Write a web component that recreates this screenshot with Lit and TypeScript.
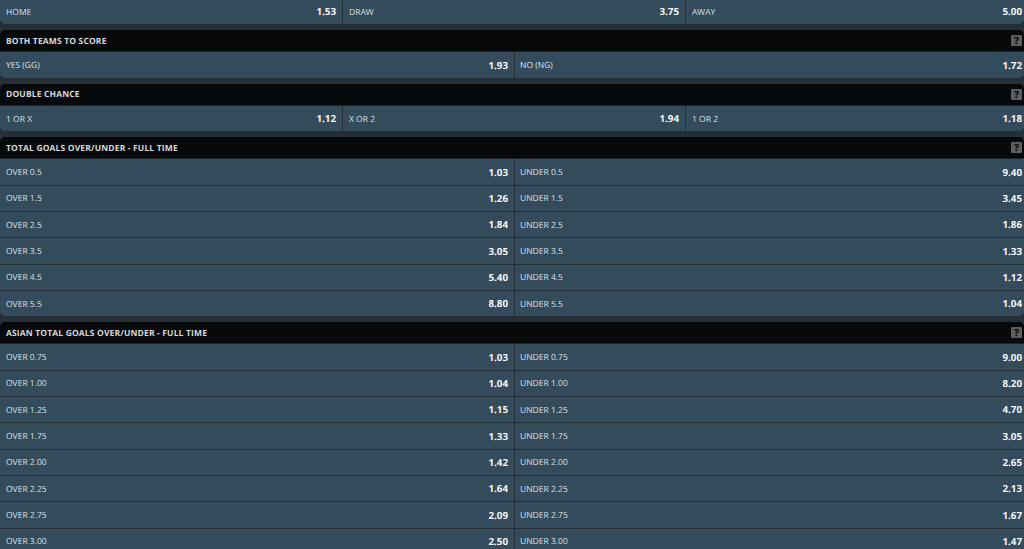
import { LitElement, html, css } from "lit";
import { customElement } from "lit/decorators.js";

type Cell = [string, string];
interface Market { title?: string; cols: number; cells: Cell[]; }

const ou = (lines: [string, string, string][]): Cell[] =>
  lines.flatMap(([l, o, u]) => [[`OVER ${l}`, o], [`UNDER ${l}`, u]] as Cell[]);

const markets: Market[] = [
  { cols: 3, cells: [["HOME", "1.53"], ["DRAW", "3.75"], ["AWAY", "5.00"]] },
  { title: "BOTH TEAMS TO SCORE", cols: 2, cells: [["YES (GG)", "1.93"], ["NO (NG)", "1.72"]] },
  { title: "DOUBLE CHANCE", cols: 3, cells: [["1 OR X", "1.12"], ["X OR 2", "1.94"], ["1 OR 2", "1.18"]] },
  { title: "TOTAL GOALS OVER/UNDER - FULL TIME", cols: 2, cells: ou([
    ["0.5", "1.03", "9.40"], ["1.5", "1.26", "3.45"], ["2.5", "1.84", "1.86"],
    ["3.5", "3.05", "1.33"], ["4.5", "5.40", "1.12"], ["5.5", "8.80", "1.04"],
  ]) },
  { title: "ASIAN TOTAL GOALS OVER/UNDER - FULL TIME", cols: 2, cells: ou([
    ["0.75", "1.03", "9.00"], ["1.00", "1.04", "8.20"], ["1.25", "1.15", "4.70"],
    ["1.75", "1.33", "3.05"], ["2.00", "1.42", "2.65"], ["2.25", "1.64", "2.13"],
    ["2.75", "2.09", "1.67"], ["3.00", "2.50", "1.47"],
  ]) },
];

@customElement("app-root")
export class AppRoot extends LitElement {
  static styles = css`
    :host {
      display: block;
      height: 549px;
      overflow: hidden;
      background: #272f36;
      font-family: "Open Sans", "Liberation Sans", sans-serif;
      text-rendering: geometricPrecision;
    }
    .first { margin-top: -1px; }
    .market { margin-bottom: 6px; }
    .head {
      height: 21.2px;
      background: #08090b;
      border-radius: 5px 5px 0 0;
      display: flex;
      align-items: center;
      justify-content: space-between;
      padding: 0 2px 0 6px;
      color: #d6d8da;
      font-size: 8.5px;
      font-weight: 700;
      letter-spacing: 0.15px;
      border-bottom: 1px solid #1d252b;
    }
    .title { padding-top: 1px; }
    .help {
      width: 11px;
      height: 11px;
      background: #5e5e5e;
      border-radius: 1px;
      color: #101214;
      font-size: 10px;
      font-weight: 800;
      line-height: 11px;
      text-align: center;
      letter-spacing: 0;
    }
    .grid { display: grid; border-radius: 0 0 5px 5px; overflow: hidden; }
    .cols2 { grid-template-columns: 515px 509px; }
    .cols3 { grid-template-columns: 343px 343px 338px; }
    .cell {
      box-sizing: border-box;
      height: 26.3px;
      background: #344b5b;
      border-bottom: 1px solid #273039;
      border-right: 1px solid #273039;
      display: flex;
      align-items: center;
      justify-content: space-between;
      padding: 0 2px 0 6px;
    }
    .cell.c2:nth-child(2n) { border-right: none; padding-left: 5px; }
    .cell.c3:nth-child(3n) { border-right: none; padding-left: 6px; }
    .last { border-bottom: none; height: 25.3px; }
    .label { color: #d8e0e5; font-size: 8.5px; font-weight: 500; padding-top: 1px; }
    .odds { color: #f4f6f7; font-size: 9.8px; font-weight: 700; padding: 0.6px 4px 0 0; }
    .cell.c2:nth-child(2n) .odds, .cell.c3:nth-child(3n) .odds { padding-right: 0; }
  `;

  render() {
    return html`${markets.map((m, i) => {
      const lastStart = m.cells.length - m.cols;
      return html`<section class="market ${i === 0 ? "first" : ""}">
        ${m.title ? html`<div class="head"><span class="title">${m.title}</span><span class="help">?</span></div>` : ""}
        <div class="grid cols${m.cols}">
          ${m.cells.map(([l, o], j) => html`<div class="cell c${m.cols} ${j >= lastStart ? "last" : ""}">
            <span class="label">${l}</span><span class="odds">${o}</span>
          </div>`)}
        </div>
      </section>`;
    })}`;
  }
}
